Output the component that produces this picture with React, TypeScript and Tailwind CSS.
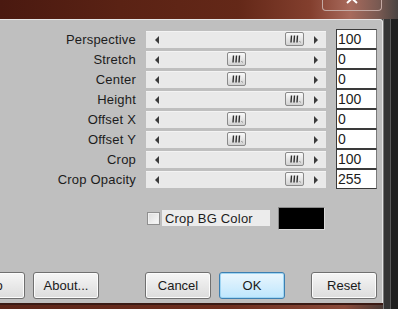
import React from "react";

const rows: { label: string; value: string; pos: number }[] = [
  { label: "Perspective", value: "100", pos: 139 },
  { label: "Stretch", value: "0", pos: 81 },
  { label: "Center", value: "0", pos: 81 },
  { label: "Height", value: "100", pos: 139 },
  { label: "Offset X", value: "0", pos: 81 },
  { label: "Offset Y", value: "0", pos: 81 },
  { label: "Crop", value: "100", pos: 139 },
  { label: "Crop Opacity", value: "255", pos: 139 },
];

function Thumb() {
  return (
    <div className="w-[19px] h-[14px] rounded-[2px] border border-[#8a8a8a] bg-gradient-to-b from-[#fafafa] to-[#d2d2d2] flex items-center justify-center">
      <svg width="15" height="10" viewBox="0 0 15 10">
        <path d="M4.5 1.5 L4 8.5 M7.5 1.5 L7 8.5 M10.5 1.5 L10 8.5" stroke="#2e2e2e" strokeWidth="1.4" />
        <path d="M12.5 7 L13.5 8.5" stroke="#8a8a8a" strokeWidth="1" />
      </svg>
    </div>
  );
}

function Slider({ pos }: { pos: number }) {
  return (
    <div className="relative w-[180px] h-[17px] bg-[#e9e9e9] border-t border-[#f3f3f3]">
      <svg className="absolute left-[9px] top-[4px]" width="4" height="8" viewBox="0 0 4 8">
        <path d="M4 0 L0 4 L4 8 Z" fill="#3a3a3a" />
      </svg>
      <svg className="absolute left-[168px] top-[4px]" width="4" height="8" viewBox="0 0 4 8">
        <path d="M0 0 L4 4 L0 8 Z" fill="#3a3a3a" />
      </svg>
      <div className="absolute top-[0px]" style={{ left: pos }}>
        <Thumb />
      </div>
    </div>
  );
}

function Btn({ children, primary, className }: { children: React.ReactNode; primary?: boolean; className?: string }) {
  return (
    <div
      className={
        "h-[27px] w-[66px] shrink-0 rounded-[3px] border flex items-center justify-center text-[13px] text-[#1a1a1a] " +
        (primary
          ? "border-[#3c7fb1] bg-gradient-to-b from-[#eaf6fd] to-[#bee6fd] shadow-[inset_0_0_0_1px_#9fd5f3]"
          : "border-[#707070] bg-gradient-to-b from-[#f6f6f6] to-[#dcdcdc] shadow-[inset_0_0_0_1px_#fcfcfc]") +
        " " +
        (className ?? "")
      }
    >
      {children}
    </div>
  );
}

export default function App() {
  return (
    <div
      className="w-[398px] h-[309px] overflow-hidden flex flex-col bg-[#2c2c2c]"
      style={{ fontFamily: '"Liberation Sans", Arial, sans-serif' }}
    >
      {/* title bar */}
      <div className="h-[19px] shrink-0 flex justify-end bg-[linear-gradient(90deg,#4a1910_0%,#5a2214_30%,#642818_60%,#833f2e_78%,#a86a5c_88%,#7a5a52_95%,#4a4442_100%)]">
        <div className="mr-[16px] w-[60px] h-[11px] border border-t-0 border-[#c4aaa4] rounded-b-[4px] relative overflow-hidden">
          <svg className="absolute left-[23px] top-[-6px]" width="12" height="10" viewBox="0 0 12 10">
            <path d="M1 0 L6 4.5 L11 0 M1 9 L6 4.5 L11 9" stroke="#ffffff" strokeWidth="2" fill="none" />
          </svg>
        </div>
      </div>
      <div className="flex flex-1 min-h-0">
        <div className="flex flex-col w-[383px]">
          {/* panel */}
          <div className="flex-1 bg-[#bfbfbf] border-t border-r border-[#e6e6e6] rounded-tr-[3px] flex flex-col pt-[9px] text-[13px] text-[#1c1c1c]">
            {rows.map((r) => (
              <div key={r.label} className="h-[20px] flex items-center">
                <div className="w-[136px] text-right leading-none tracking-[0.2px]">{r.label}</div>
                <div className="ml-[10px]">
                  <Slider pos={r.pos} />
                </div>
                <div className="ml-[10px] w-[41px] h-[20px] bg-white border-t border-l border-[#3a3a3a] border-r border-r-[#7a7a7a] border-b border-b-[#3a3a3a] pl-[1px] flex items-center leading-none text-[14px]">
                  {r.value}
                </div>
              </div>
            ))}
            <div className="mt-[18px] h-[22px] flex items-center">
              <div className="ml-[147px] w-[13px] h-[13px] border border-[#8f8f8f] bg-gradient-to-br from-[#dcdcdc] to-[#fafafa] shadow-[inset_0_0_0_1px_#f0f0f0]" />
              <div className="ml-[2px] w-[108px] h-[16px] bg-[#ececec] flex items-center pl-[3px] leading-none tracking-[0.2px]">
                Crop BG Color
              </div>
              <div className="ml-[8px] w-[47px] h-[23px] bg-black border border-[#8a8a8a] border-b-[#dadada] border-r-[#dadada]" />
            </div>
            <div className="mt-[43px] flex items-center">
              <Btn className="ml-[-41px]">Info</Btn>
              <Btn className="ml-[8px]">About...</Btn>
              <Btn className="ml-[46px]">Cancel</Btn>
              <Btn className="ml-[8px]" primary>
                OK
              </Btn>
              <Btn className="ml-[26px]">Reset</Btn>
            </div>
          </div>
          <div className="h-[6px] shrink-0 border-t-2 border-[#3a1a14] bg-[linear-gradient(90deg,#5a2418,#6e2e1e_60%,#8a4a3a_90%,#4a3a36)]" />
        </div>
        {/* right frame */}
        <div className="flex-1 flex">
          <div className="w-[7px] bg-[#353535] border-l border-[#7a7a7a]" />
          <div className="w-[1px] bg-[#5a5a5a]" />
          <div className="flex-1 bg-[#1f1f1f]" />
        </div>
      </div>
    </div>
  );
}
